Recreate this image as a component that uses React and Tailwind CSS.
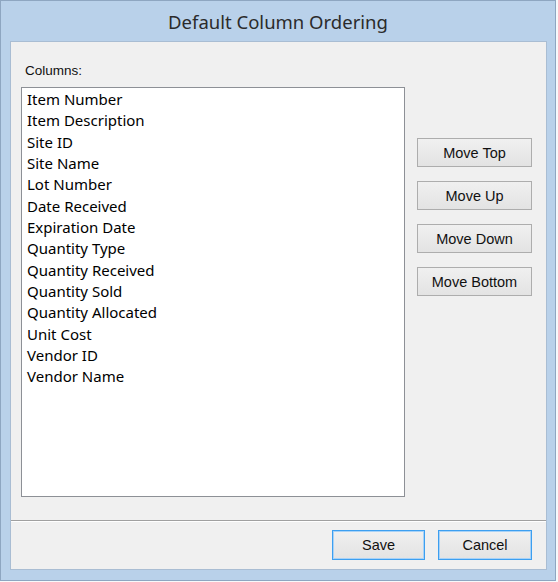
import React from 'react';

const COLUMNS = [
  'Item Number',
  'Item Description',
  'Site ID',
  'Site Name',
  'Lot Number',
  'Date Received',
  'Expiration Date',
  'Quantity Type',
  'Quantity Received',
  'Quantity Sold',
  'Quantity Allocated',
  'Unit Cost',
  'Vendor ID',
  'Vendor Name',
];

const MOVES = ['Move Top', 'Move Up', 'Move Down', 'Move Bottom'];

function WinButton({ children, primary, className = '' }) {
  return (
    <button
      type="button"
      className={`h-[29px] pt-[1px] border bg-gradient-to-b from-[#f0f0f0] to-[#e3e3e3] text-[14.5px] leading-none text-[#111] font-['Liberation_Sans',Arial,sans-serif] ${
        primary ? 'border-[#3c9ff0] shadow-[inset_0_0_0_1px_#a8d2f7]' : 'border-[#adadad]'
      } ${className}`}
    >
      {children}
    </button>
  );
}

export default function App() {
  return (
    <div className="w-[558px] h-[582px] bg-[#f7f9fb]">
      <div className="w-[556px] h-[581px] border border-[#8ea6c1] bg-[#b9d1ea] flex flex-col">
        {/* Title bar */}
        <div className="h-[40px] pt-[1px] flex items-center justify-center text-[18.5px] text-[#2b2b2b] font-['Noto_Sans',sans-serif]">
          Default Column Ordering
        </div>

        {/* Client area */}
        <div className="ml-[9px] w-[537px] h-[529px] border border-[#a9bdd3] bg-[#f0f0f0] flex flex-col">
          <div className="h-[478px] pl-[10px] pt-[21px]">
            <div className="h-4 ml-[4px] text-[13.5px] leading-4 text-[#111] font-['Liberation_Sans',Arial,sans-serif]">Columns:</div>
            <div className="mt-2 flex items-start">
              <div className="w-[384px] h-[410px] border border-[#8d9096] bg-white pt-[1px] pl-[5px] font-['Noto_Sans',sans-serif] text-[15px] text-black">
                {COLUMNS.map((c) => (
                  <div key={c} className="leading-[21.33px] h-[21.33px] whitespace-nowrap">
                    {c}
                  </div>
                ))}
              </div>
              <div className="ml-[12px] mt-[51px] flex flex-col gap-[14px]">
                {MOVES.map((m) => (
                  <WinButton key={m} className="w-[115px]">
                    {m}
                  </WinButton>
                ))}
              </div>
            </div>
          </div>

          <div className="h-px bg-[#a0a0a0]" />
          <div className="h-px bg-white" />

          <div className="flex-1 flex justify-end items-start pt-[8px] pr-[14px] gap-[13px]">
            <WinButton primary className="w-[93px] h-[30px]">Save</WinButton>
            <WinButton primary className="w-[94px] h-[30px]">Cancel</WinButton>
          </div>
        </div>
      </div>
    </div>
  );
}
